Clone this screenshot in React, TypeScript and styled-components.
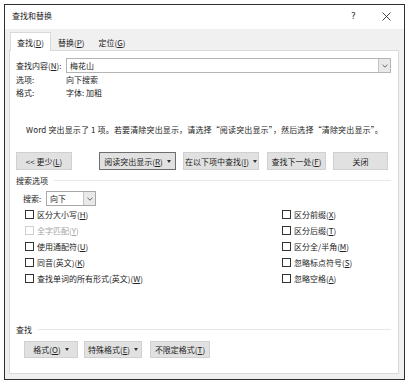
import * as React from "react"
import styled, { createGlobalStyle } from "styled-components"

const GlobalStyle = createGlobalStyle`
  html, body {
    margin: 0;
    padding: 0;
    background: #ffffff;
  }
  body {
    font-family: "Noto Sans CJK SC", "Noto Sans", sans-serif;
    font-size: 8px;
    color: #222222;
  }
`

const ScWindow = styled.div`
  box-sizing: border-box;
  margin: 4px 0 0 4px;
  width: 401px;
  height: 376px;
  border: 1px solid #2f2f2f;
  background: #f0f0f0;
  display: flex;
  flex-direction: column;
`

const ScTitleBar = styled.div`
  height: 24px;
  background: #ffffff;
  display: flex;
  align-items: flex-start;
  padding: 5px 0 0 7px;
  box-sizing: border-box;
  font-size: 8px;
`

const ScTitle = styled.div`
  flex: 1;
  line-height: 12px;
`

const ScTitleButton = styled.div<{ $w: number }>`
  width: ${(p) => p.$w}px;
  height: 12px;
  display: flex;
  align-items: center;
  justify-content: center;
  font-family: "DejaVu Sans", sans-serif;
  font-size: 9px;
  color: #333;
`

const ScTabStrip = styled.div`
  height: 21px;
  display: flex;
  align-items: flex-end;
  padding-left: 5px;
  position: relative;
  z-index: 1;
`

const ScTab = styled.div<{ $active?: boolean }>`
  box-sizing: border-box;
  height: ${(p) => (p.$active ? "19px" : "17px")};
  margin-bottom: ${(p) => (p.$active ? "-1px" : "0")};
  padding: 0 6px;
  display: flex;
  align-items: center;
  background: ${(p) => (p.$active ? "#ffffff" : "transparent")};
  border: 1px solid ${(p) => (p.$active ? "#d9d9d9" : "transparent")};
  border-bottom: none;
`

const ScPanel = styled.div`
  flex: 1;
  margin: 0 5px 5px 4px;
  background: #ffffff;
  border: 1px solid #d9d9d9;
  padding: 7px 7px 0 6px;
  display: flex;
  flex-direction: column;
`

const ScFieldRow = styled.div`
  display: flex;
  align-items: center;
  height: 15px;
`

const ScLabel = styled.div<{ $w?: number }>`
  width: ${(p) => p.$w ?? 50}px;
  flex-shrink: 0;
`

const ScCombo = styled.div`
  flex: 1;
  box-sizing: border-box;
  height: 15px;
  border: 1px solid #b4b4b4;
  display: flex;
  align-items: center;
`

const ScComboText = styled.div`
  flex: 1;
  padding-left: 3px;
`

const ScArrowBox = styled.div`
  box-sizing: border-box;
  width: 12px;
  height: 100%;
  background: #e9e9e9;
  border-left: 1px solid #c4c4c4;
  display: flex;
  align-items: center;
  justify-content: center;
`

const ScInfoRow = styled.div`
  display: flex;
  height: 13px;
  align-items: center;
`

const ScMessage = styled.div`
  margin-top: 24px;
  height: 13px;
  padding-left: 10px;
  letter-spacing: 0.15px;
  display: flex;
  align-items: center;
  white-space: nowrap;
`

const ScButtonRow = styled.div<{ $top: number; $indent?: number }>`
  margin-top: ${(p) => p.$top}px;
  padding-left: ${(p) => p.$indent ?? 0}px;
  display: flex;
  align-items: center;
`

const ScButton = styled.div<{ $w: number; $gap?: number; $focus?: boolean; $h?: number }>`
  box-sizing: border-box;
  width: ${(p) => p.$w}px;
  height: ${(p) => p.$h ?? 18}px;
  margin-left: ${(p) => p.$gap ?? 0}px;
  background: #e1e1e1;
  border: 1px solid ${(p) => (p.$focus ? "#6e6e6e" : "#d0d0d0")};
  display: flex;
  align-items: center;
  justify-content: center;
  white-space: nowrap;
`

const ScCaret = styled.span`
  display: inline-block;
  margin-left: 4px;
  width: 0;
  height: 0;
  border-left: 2px solid transparent;
  border-right: 2px solid transparent;
  border-top: 3px solid #333;
`

const ScSection = styled.div<{ $top: number }>`
  margin-top: ${(p) => p.$top}px;
  height: 13px;
  display: flex;
  align-items: center;
  gap: 6px;
  &::after {
    content: "";
    flex: 1;
    height: 1px;
    background: #e8e8e8;
  }
`

const ScSelectRow = styled.div`
  margin-top: 4px;
  padding-left: 7px;
  display: flex;
  align-items: center;
  height: 15px;
`

const ScSelect = styled.div`
  box-sizing: border-box;
  width: 50px;
  height: 15px;
  border: 1px solid #a8a8a8;
  display: flex;
  align-items: center;
`

const ScOptions = styled.div`
  display: grid;
  grid-template-columns: 257px 1fr;
  grid-auto-rows: 16px;
  padding-left: 9px;
`

const ScCheck = styled.div<{ $disabled?: boolean }>`
  display: flex;
  align-items: center;
  gap: 3px;
  color: ${(p) => (p.$disabled ? "#a3a3a3" : "#222222")};
`

const ScBox = styled.span<{ $disabled?: boolean }>`
  box-sizing: border-box;
  width: 9px;
  height: 9px;
  border: 1px solid ${(p) => (p.$disabled ? "#cfcfcf" : "#333333")};
  background: #ffffff;
`

const Key = styled.span`
  text-decoration: underline;
  text-underline-offset: 1px;
`

const Chevron = () => (
  <svg width="6" height="4" viewBox="0 0 6 4">
    <polyline points="0.5,0.8 3,3.2 5.5,0.8" fill="none" stroke="#555" strokeWidth="0.9" />
  </svg>
)

const CloseIcon = () => (
  <svg width="9" height="9" viewBox="0 0 9 9">
    <path d="M0.5 0.5 L8.5 8.5 M8.5 0.5 L0.5 8.5" stroke="#333" strokeWidth="0.9" />
  </svg>
)

const options: [string, string, string, boolean?][] = [
  ["区分大小写(", "H", ")"],
  ["区分前缀(", "X", ")"],
  ["全字匹配(", "Y", ")", true],
  ["区分后缀(", "T", ")"],
  ["使用通配符(", "U", ")"],
  ["区分全/半角(", "M", ")"],
  ["同音(英文)(", "K", ")"],
  ["忽略标点符号(", "S", ")"],
  ["查找单词的所有形式(英文)(", "W", ")"],
  ["忽略空格(", "A", ")"],
]

export default function App() {
  return (
    <>
      <GlobalStyle />
      <ScWindow>
        <ScTitleBar>
          <ScTitle>查找和替换</ScTitle>
          <ScTitleButton $w={29}>?</ScTitleButton>
          <ScTitleButton $w={36}>
            <CloseIcon />
          </ScTitleButton>
        </ScTitleBar>
        <ScTabStrip>
          <ScTab $active>
            查找(<Key>D</Key>)
          </ScTab>
          <ScTab>
            替换(<Key>P</Key>)
          </ScTab>
          <ScTab>
            定位(<Key>G</Key>)
          </ScTab>
        </ScTabStrip>
        <ScPanel>
          <ScFieldRow>
            <ScLabel>
              查找内容(<Key>N</Key>):
            </ScLabel>
            <ScCombo>
              <ScComboText>梅花山</ScComboText>
              <ScArrowBox>
                <Chevron />
              </ScArrowBox>
            </ScCombo>
          </ScFieldRow>
          <ScInfoRow>
            <ScLabel>选项:</ScLabel>
            向下搜索
          </ScInfoRow>
          <ScInfoRow>
            <ScLabel>格式:</ScLabel>
            字体: 加粗
          </ScInfoRow>
          <ScMessage>
            Word 突出显示了 1 项。若要清除突出显示，请选择“阅读突出显示”，然后选择“清除突出显示”。
          </ScMessage>
          <ScButtonRow $top={16}>
            <ScButton $w={56}>
              &lt;&lt; 更少(<Key>L</Key>)
            </ScButton>
            <ScButton $w={77} $gap={27} $focus>
              阅读突出显示(<Key>R</Key>)
              <ScCaret />
            </ScButton>
            <ScButton $w={76} $gap={7}>
              在以下项中查找(<Key>I</Key>)
              <ScCaret />
            </ScButton>
            <ScButton $w={59} $gap={8}>
              查找下一处(<Key>F</Key>)
            </ScButton>
            <ScButton $w={55} $gap={7}>
              关闭
            </ScButton>
          </ScButtonRow>
          <ScSection $top={4}>搜索选项</ScSection>
          <ScSelectRow>
            <ScLabel $w={23}>搜索:</ScLabel>
            <ScSelect>
              <ScComboText>向下</ScComboText>
              <ScArrowBox>
                <Chevron />
              </ScArrowBox>
            </ScSelect>
          </ScSelectRow>
          <ScOptions>
            {options.map(([pre, key, post, disabled]) => (
              <ScCheck key={pre} $disabled={disabled}>
                <ScBox $disabled={disabled} />
                <span>
                  {pre}
                  <Key>{key}</Key>
                  {post}
                </span>
              </ScCheck>
            ))}
          </ScOptions>
          <ScSection $top={37}>查找</ScSection>
          <ScButtonRow $top={5} $indent={8}>
            <ScButton $w={54} $h={17}>
              格式(<Key>O</Key>)
              <ScCaret />
            </ScButton>
            <ScButton $w={58} $gap={6} $h={17}>
              特殊格式(<Key>E</Key>)
              <ScCaret />
            </ScButton>
            <ScButton $w={60} $gap={8} $h={17}>
              不限定格式(<Key>T</Key>)
            </ScButton>
          </ScButtonRow>
        </ScPanel>
      </ScWindow>
    </>
  )
}
